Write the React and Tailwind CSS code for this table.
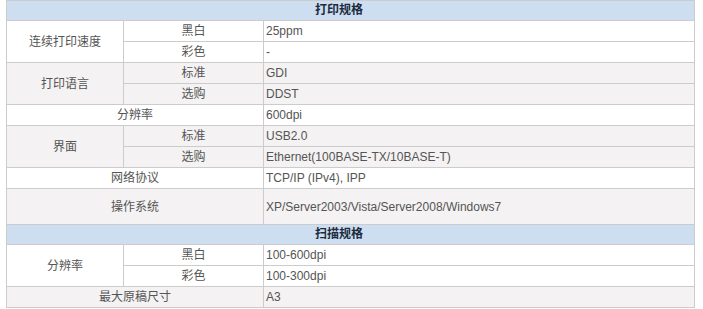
import React from "react";

const font = { fontFamily: '"Liberation Sans", Arial, "Noto Sans CJK SC", sans-serif' };

function Head({ title }) {
  return (
    <tr className="h-[20px] bg-[#cddef0]">
      <td colSpan={3} className="border border-[#cccccc] p-0 pr-[23px] text-center text-[12px] font-bold text-[#1c2b3f] leading-[19px]">
        {title}
      </td>
    </tr>
  );
}

const cell = "border border-[#cccccc] p-0 text-[12px] text-[#555555] leading-[20px]";

export default function App() {
  return (
    <div className="w-[703px] h-[309px] bg-white overflow-hidden" style={font}>
      <table className="ml-[6px] w-[688px] border-collapse table-fixed">
        <colgroup>
          <col className="w-[117px]" />
          <col className="w-[140px]" />
          <col className="w-[431px]" />
        </colgroup>
        <tbody>
          <Head title="打印规格" />
          <tr className="h-[21px] bg-white">
            <td rowSpan={2} className={`${cell} text-center`}>连续打印速度</td>
            <td className={`${cell} text-center`}>黑白</td>
            <td className={`${cell} pl-[2px]`}>25ppm</td>
          </tr>
          <tr className="h-[21px] bg-white">
            <td className={`${cell} text-center`}>彩色</td>
            <td className={`${cell} pl-[2px]`}>-</td>
          </tr>
          <tr className="h-[21px] bg-[#f4f2f2]">
            <td rowSpan={2} className={`${cell} text-center`}>打印语言</td>
            <td className={`${cell} text-center`}>标准</td>
            <td className={`${cell} pl-[2px]`}>GDI</td>
          </tr>
          <tr className="h-[21px] bg-[#f4f2f2]">
            <td className={`${cell} text-center`}>选购</td>
            <td className={`${cell} pl-[2px]`}>DDST</td>
          </tr>
          <tr className="h-[21px] bg-white">
            <td colSpan={2} className={`${cell} text-center`}>分辨率</td>
            <td className={`${cell} pl-[2px]`}>600dpi</td>
          </tr>
          <tr className="h-[21px] bg-[#f4f2f2]">
            <td rowSpan={2} className={`${cell} text-center`}>界面</td>
            <td className={`${cell} text-center`}>标准</td>
            <td className={`${cell} pl-[2px]`}>USB2.0</td>
          </tr>
          <tr className="h-[21px] bg-[#f4f2f2]">
            <td className={`${cell} text-center`}>选购</td>
            <td className={`${cell} pl-[2px]`}>Ethernet(100BASE-TX/10BASE-T)</td>
          </tr>
          <tr className="h-[21px] bg-white">
            <td colSpan={2} className={`${cell} text-center`}>网络协议</td>
            <td className={`${cell} pl-[2px]`}>TCP/IP (IPv4), IPP</td>
          </tr>
          <tr className="h-[36px] bg-[#f4f2f2]">
            <td colSpan={2} className={`${cell} text-center`}>操作系统</td>
            <td className={`${cell} pl-[2px]`}>XP/Server2003/Vista/Server2008/Windows7</td>
          </tr>
          <Head title="扫描规格" />
          <tr className="h-[21px] bg-white">
            <td rowSpan={2} className={`${cell} text-center`}>分辨率</td>
            <td className={`${cell} text-center`}>黑白</td>
            <td className={`${cell} pl-[2px]`}>100-600dpi</td>
          </tr>
          <tr className="h-[21px] bg-white">
            <td className={`${cell} text-center`}>彩色</td>
            <td className={`${cell} pl-[2px]`}>100-300dpi</td>
          </tr>
          <tr className="h-[21px] bg-[#f4f2f2]">
            <td colSpan={2} className={`${cell} text-center`}>最大原稿尺寸</td>
            <td className={`${cell} pl-[2px]`}>A3</td>
          </tr>
        </tbody>
      </table>
    </div>
  );
}
